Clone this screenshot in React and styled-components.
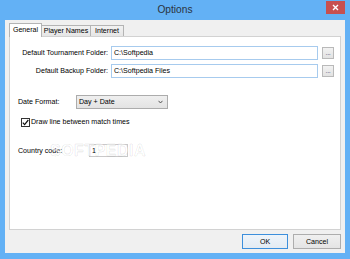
import React from 'react';
import styled, { createGlobalStyle } from 'styled-components';

const Global = createGlobalStyle`
  html, body { margin: 0; padding: 0; background: #63b1f5; }
  body {
    width: 350px; height: 259px; overflow: hidden;
    font-family: "Liberation Sans", Arial, sans-serif;
    font-size: 7.1px; color: #000;
  }
  * { box-sizing: border-box; }
`;

const Window = styled.div`
  width: 350px;
  height: 259px;
  background: #63b1f5;
  display: flex;
  flex-direction: column;
  padding: 0 5px 6px 5px;
`;

const TitleBar = styled.div`
  height: 20px;
  flex: none;
  display: grid;
  grid-template-columns: 1fr auto 1fr;
  align-items: start;
`;

const Title = styled.div`
  grid-column: 2;
  font-size: 10.2px;
  line-height: 20px;
  color: #2b333c;
`;

const Close = styled.div`
  grid-column: 3;
  justify-self: end;
  margin-top: 1px;
  width: 19px;
  height: 13px;
  background: #c75050;
  display: flex;
  align-items: center;
  justify-content: center;
`;

const Client = styled.div`
  flex: 1;
  background: #f0f0f0;
  display: flex;
  flex-direction: column;
  padding: 3px 4px 0 4px;
`;

const TabStrip = styled.div`
  display: flex;
  align-items: flex-end;
  height: 13px;
  flex: none;
`;

const Tab = styled.div`
  position: relative;
  z-index: ${p => (p.$active ? 2 : 1)};
  width: ${p => p.$w}px;
  height: ${p => (p.$active ? 14 : 11)}px;
  margin-bottom: ${p => (p.$active ? -1 : 0)}px;
  margin-left: ${p => (p.$first ? 0 : -1)}px;
  border: 1px solid #b4b4b4;
  border-bottom: none;
  background: ${p => (p.$active ? '#ffffff' : 'linear-gradient(#f2f2f2, #e6e6e6)')};
  display: flex;
  align-items: center;
  justify-content: center;
  padding-top: ${p => (p.$active ? 0 : 1)}px;
  line-height: 1;
  white-space: nowrap;
`;

const Panel = styled.div`
  position: relative;
  flex: 1;
  background: #ffffff;
  border: 1px solid #d2d2d2;
  padding: 9px 6px 0 8px;
  display: flex;
  flex-direction: column;
`;

const FolderGrid = styled.div`
  display: grid;
  grid-template-columns: 90px 1fr 13px;
  grid-auto-rows: 14px;
  column-gap: 3px;
  row-gap: 4px;
  align-items: center;
`;

const Label = styled.div`
  text-align: ${p => (p.$right ? 'right' : 'left')};
  width: ${p => (p.$w ? `${p.$w}px` : 'auto')};
  flex: none;
  white-space: nowrap;
`;

const TextInput = styled.div`
  height: ${p => p.$h || 14}px;
  width: ${p => (p.$w ? `${p.$w}px` : 'auto')};
  border: 1px solid ${p => p.$border || '#a7cbee'};
  background: #fff;
  padding-left: 2px;
  display: flex;
  align-items: center;
  white-space: nowrap;
`;

const DotsButton = styled.div`
  justify-self: end;
  width: 12px;
  height: 12px;
  border: 1px solid #b9b9b9;
  background: linear-gradient(#f2f2f2, #e2e2e2);
  display: flex;
  align-items: flex-end;
  justify-content: center;
  font-size: 7px;
  line-height: 1;
  letter-spacing: -0.3px;
  color: #5a5a7a;
  padding-bottom: 2px;
`;

const Row = styled.div`
  display: flex;
  align-items: center;
  margin-top: ${p => p.$mt}px;
  margin-left: ${p => p.$ml || 0}px;
  height: ${p => p.$h}px;
  gap: ${p => p.$gap || 0}px;
`;

const Select = styled.div`
  width: 92px;
  height: 14px;
  border: 1px solid #acacac;
  background: linear-gradient(#efefef, #e3e3e3);
  display: flex;
  align-items: center;
  justify-content: space-between;
  padding: 0 4px 0 2px;
`;

const CheckBox = styled.div`
  width: 9px;
  height: 9px;
  border: 1px solid #333;
  background: #fff;
  display: flex;
  align-items: center;
  justify-content: center;
`;

const Watermark = styled.div`
  position: absolute;
  left: 40px;
  top: 105px;
  font-size: 16px;
  font-weight: bold;
  letter-spacing: 0.5px;
  color: rgba(255, 255, 255, 0.6);
  -webkit-text-stroke: 0.6px rgba(0, 0, 0, 0.13);
  pointer-events: none;
  font-family: "Liberation Sans", Arial, sans-serif;
`;

const Footer = styled.div`
  height: 23px;
  flex: none;
  display: flex;
  justify-content: flex-end;
  align-items: flex-start;
  padding-top: 4px;
  gap: 5px;
`;

const Button = styled.div`
  width: ${p => p.$w}px;
  height: 15px;
  border: 1px solid ${p => (p.$default ? '#3c8fdc' : '#adadad')};
  background: ${p => (p.$default ? 'linear-gradient(#eef4fa, #e3ebf3)' : 'linear-gradient(#f0f0f0, #e4e4e4)')};
  display: flex;
  align-items: center;
  justify-content: center;
`;

export default function App() {
  return (
    <>
      <Global />
      <Window>
        <TitleBar>
          <Title>Options</Title>
          <Close>
            <svg width="7" height="7" viewBox="0 0 7 7">
              <path d="M1 1 L6 6 M6 1 L1 6" stroke="#fff" strokeWidth="1.4" />
            </svg>
          </Close>
        </TitleBar>
        <Client>
          <TabStrip>
            <Tab $active $first $w={33}>General</Tab>
            <Tab $w={50}>Player Names</Tab>
            <Tab $w={34}>Internet</Tab>
          </TabStrip>
          <Panel>
            <FolderGrid>
              <Label $right>Default Tournament Folder:</Label>
              <TextInput>C:\Softpedia</TextInput>
              <DotsButton>...</DotsButton>
              <Label $right>Default Backup Folder:</Label>
              <TextInput>C:\Softpedia Files</TextInput>
              <DotsButton>...</DotsButton>
            </FolderGrid>
            <Row $mt={17} $h={14}>
              <Label $w={58}>Date Format:</Label>
              <Select>
                <span>Day + Date</span>
                <svg width="5" height="4" viewBox="0 0 5 4">
                  <path d="M0.5 0.8 L2.5 3 L4.5 0.8" stroke="#444" strokeWidth="0.9" fill="none" />
                </svg>
              </Select>
            </Row>
            <Row $mt={8} $ml={3} $h={10} $gap={1}>
              <CheckBox>
                <svg width="7" height="7" viewBox="0 0 7 7">
                  <path d="M0.8 3.6 L2.6 5.6 L6.3 1" stroke="#111" strokeWidth="1.2" fill="none" />
                </svg>
              </CheckBox>
              <Label>Draw line between match times</Label>
            </Row>
            <Row $mt={17} $h={13}>
              <Label $w={71}>Country code:</Label>
              <TextInput $w={39} $h={13} $border="#c9c9c9">1</TextInput>
            </Row>
            <Watermark>SOFTPEDIA</Watermark>
          </Panel>
          <Footer>
            <Button $default $w={46}>OK</Button>
            <Button $w={48}>Cancel</Button>
          </Footer>
        </Client>
      </Window>
    </>
  );
}
